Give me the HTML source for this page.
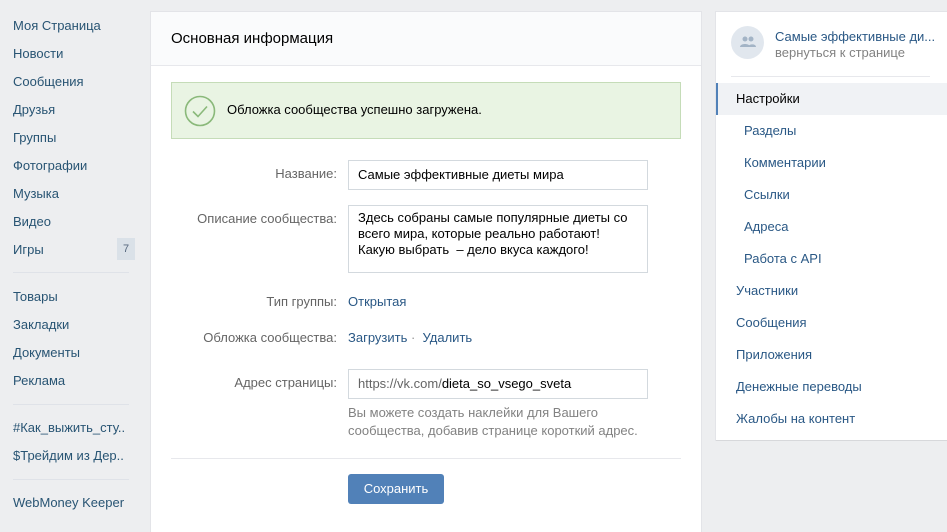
<!DOCTYPE html>
<html><head><meta charset="utf-8"><style>
*{margin:0;padding:0;box-sizing:border-box}
body{width:947px;height:511px;overflow:hidden;background:#edeef0;font-family:"Liberation Sans",sans-serif;font-size:13px;color:#000;position:relative}
.a{position:absolute;white-space:nowrap}
.sb{color:#285473;left:13px}
.ln{position:absolute;height:1px;background:#dfe2e8}
.lbl{color:#656565;right:610px;text-align:right}
.inp{position:absolute;left:348px;width:300px;border:1px solid #d3d9de;background:#fff;padding:0 0 0 9px;color:#000}
.lk{color:#2a5885}
.ri{color:#2a5885}
</style></head><body>
<div class="a sb" style="top:18px">Моя Страница</div>
<div class="a sb" style="top:46px">Новости</div>
<div class="a sb" style="top:74px">Сообщения</div>
<div class="a sb" style="top:102px">Друзья</div>
<div class="a sb" style="top:130px">Группы</div>
<div class="a sb" style="top:158px">Фотографии</div>
<div class="a sb" style="top:186px">Музыка</div>
<div class="a sb" style="top:214px">Видео</div>
<div class="a sb" style="top:242px">Игры</div>
<div class="a" style="left:117px;top:238px;width:18px;height:22px;background:#dae1e8;color:#55677d;font-size:11px;text-align:center;line-height:22px">7</div>
<div class="ln" style="left:13px;top:272px;width:116px"></div>
<div class="a sb" style="top:289px">Товары</div>
<div class="a sb" style="top:317px">Закладки</div>
<div class="a sb" style="top:345px">Документы</div>
<div class="a sb" style="top:373px">Реклама</div>
<div class="ln" style="left:13px;top:404px;width:116px"></div>
<div class="a sb" style="top:420px">#Как_выжить_сту..</div>
<div class="a sb" style="top:448px">$Трейдим из Дер..</div>
<div class="ln" style="left:13px;top:479px;width:116px"></div>
<div class="a sb" style="top:495px">WebMoney Keeper</div>
<div class="a" style="left:151px;top:12px;width:550px;height:520px;background:#fff;box-shadow:0 1px 0 #d7d8db,0 0 0 1px #e3e4e8"></div>
<div class="a" style="left:151px;top:12px;width:550px;height:54px;background:#fafbfc;border-bottom:1px solid #e7e8ec"></div>
<div class="a" style="left:171px;top:30px;font-size:15px;color:#000">Основная информация</div>
<div class="a" style="left:171px;top:82px;width:510px;height:57px;background:#e9f4e3;border:1px solid #c5dcb8"></div>
<svg class="a" style="left:184px;top:95px" width="32" height="32"><circle cx="16" cy="16" r="14.5" fill="none" stroke="#8ab97a" stroke-width="1.6"/><path d="M9 16.5l5 5 9-10" fill="none" stroke="#8ab97a" stroke-width="1.6"/></svg>
<div class="a" style="left:227px;top:102px">Обложка сообщества успешно загружена.</div>
<div class="a lbl" style="top:166px">Название:</div>
<div class="inp" style="top:160px;height:30px;line-height:28px">Самые эффективные диеты мира</div>
<div class="a lbl" style="top:211px">Описание сообщества:</div>
<div class="inp" style="top:205px;height:68px;padding-top:4px;line-height:16px;white-space:nowrap">Здесь собраны самые популярные диеты со<br>всего мира, которые реально работают!<br>Какую выбрать &nbsp;– дело вкуса каждого!</div>
<div class="a lbl" style="top:294px">Тип группы:</div>
<div class="a lk" style="left:348px;top:294px">Открытая</div>
<div class="a lbl" style="top:330px">Обложка сообщества:</div>
<div class="a lk" style="left:348px;top:330px">Загрузить <span style="color:#939393">·</span>&nbsp; Удалить</div>
<div class="a lbl" style="top:375px">Адрес страницы:</div>
<div class="inp" style="top:369px;height:30px;line-height:28px"><span style="color:#656565">https://vk.com/</span>dieta_so_vsego_sveta</div>
<div class="a" style="left:348px;top:404px;color:#828282;line-height:18px;white-space:normal;width:310px">Вы можете создать наклейки для Вашего сообщества, добавив странице короткий адрес.</div>
<div class="ln" style="left:171px;top:458px;width:510px;background:#e7e8ec"></div>
<div class="a" style="left:348px;top:474px;width:96px;height:30px;background:#5181b8;border-radius:3px;color:#fff;text-align:center;line-height:30px">Сохранить</div>
<div class="a" style="left:716px;top:12px;width:231px;height:428px;background:#fff;box-shadow:0 1px 0 #d7d8db,0 0 0 1px #e3e4e8"></div>
<div class="a" style="left:731px;top:26px;width:33px;height:33px;border-radius:50%;background:#e1e7ee"></div>
<svg class="a" style="left:739px;top:35px" width="18" height="14"><circle cx="6" cy="4" r="2.5" fill="#a3b4c6"/><circle cx="12" cy="4" r="2.5" fill="#a3b4c6"/><path d="M1 12c0-4 10-4 10 0zM9 12c0-3 8-4 8 0z" fill="#a3b4c6"/></svg>
<div class="a ri" style="left:775px;top:29px">Самые эффективные ди...</div>
<div class="a" style="left:775px;top:45px;color:#828282">вернуться к странице</div>
<div class="ln" style="left:731px;top:76px;width:199px;background:#e7e8ec"></div>
<div class="a" style="left:716px;top:83px;width:231px;height:32px;background:#f0f2f5;border-left:2px solid #5181b8"></div>
<div class="a" style="left:736px;top:91px">Настройки</div>
<div class="a ri" style="left:744px;top:123px">Разделы</div>
<div class="a ri" style="left:744px;top:155px">Комментарии</div>
<div class="a ri" style="left:744px;top:187px">Ссылки</div>
<div class="a ri" style="left:744px;top:219px">Адреса</div>
<div class="a ri" style="left:744px;top:251px">Работа с API</div>
<div class="a ri" style="left:736px;top:283px">Участники</div>
<div class="a ri" style="left:736px;top:315px">Сообщения</div>
<div class="a ri" style="left:736px;top:347px">Приложения</div>
<div class="a ri" style="left:736px;top:379px">Денежные переводы</div>
<div class="a ri" style="left:736px;top:411px">Жалобы на контент</div>
</body></html>
